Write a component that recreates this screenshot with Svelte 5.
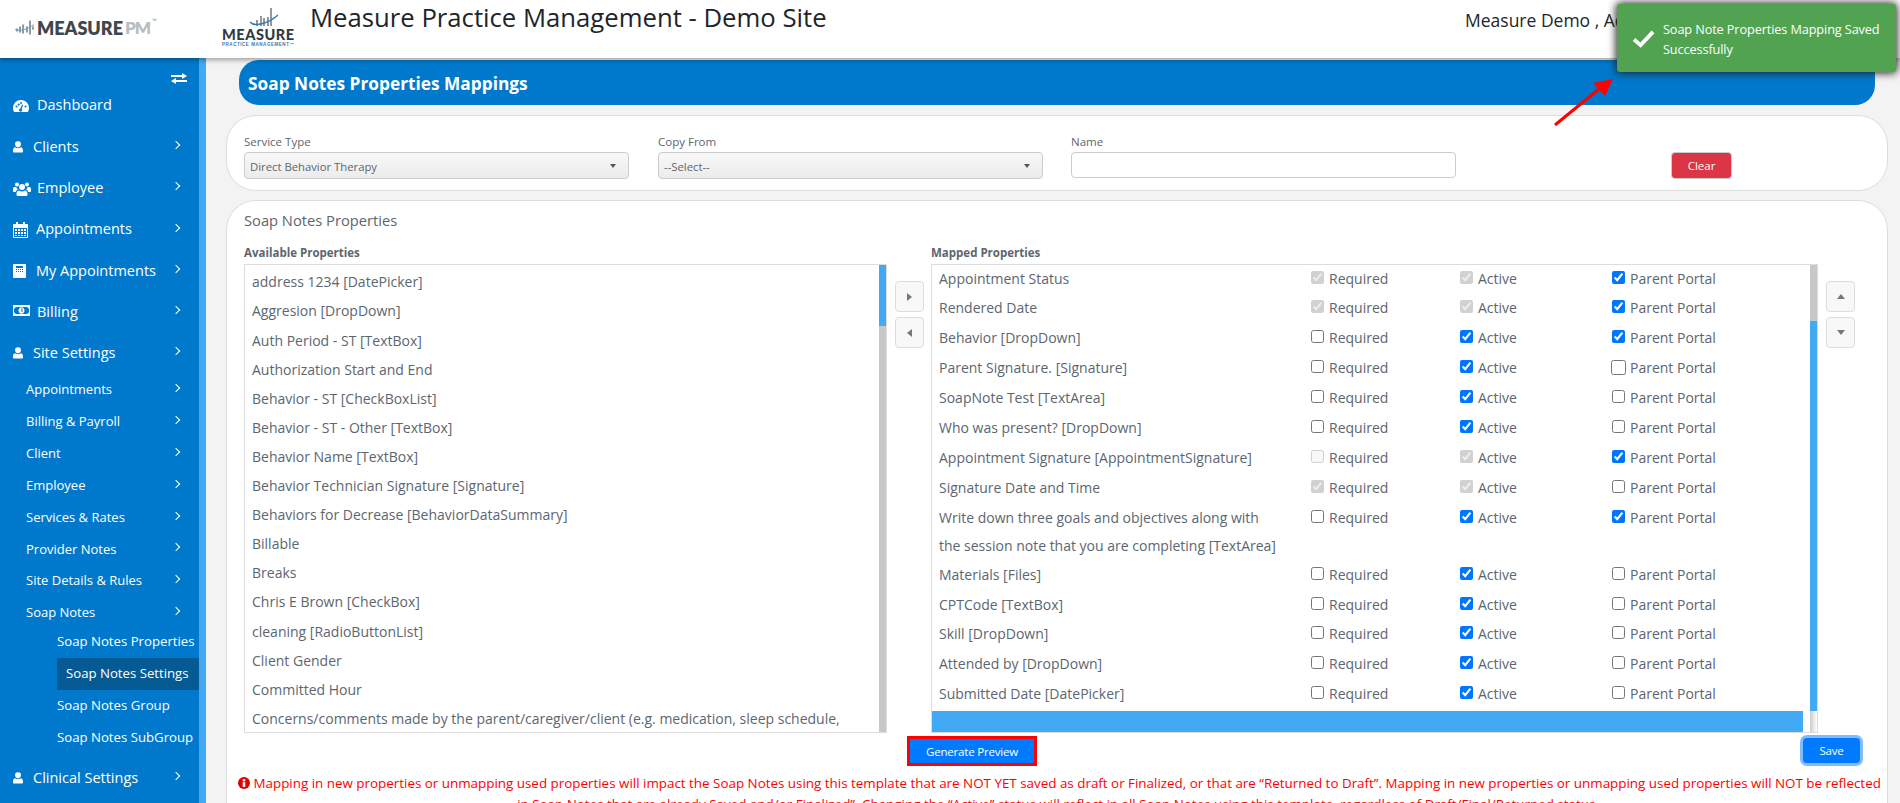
<script>
  const icons = {
    gauge: 'M8 2a8 8 0 0 0-8 8c0 1.500.400 2.900 1.100 4h13.800A8 8 0 0 0 16 10a8 8 0 0 0-8-8zm0 2a1 1 0 1 1 0 2 1 1 0 0 1 0-2zM3.500 9.500a1 1 0 1 1 0-2 1 1 0 0 1 0 2zm1.200-3a1 1 0 1 1 0 .1zM8.800 11.200a1.500 1.500 0 1 1-1.400-.6l1.800-4 .9.400zM12.500 9.500a1 1 0 1 1 0-2 1 1 0 0 1 0 2z',
    user: 'M6 1a3.500 3.500 0 0 1 3.500 3.800C9.500 7 8 8.500 6 8.500S2.500 7 2.500 4.800A3.500 3.500 0 0 1 6 1zM2.600 8.200C3.500 9 4.700 9.500 6 9.500s2.500-.500 3.400-1.300C11 8.500 12 10 12 12v1.300c0 .700-.500 1.200-1.200 1.200H1.200C.500 14.500 0 14 0 13.300V12c0-2 1-3.500 2.600-3.800z',
    users: 'M4 2.500a2 2 0 1 1 0 4 2 2 0 0 1 0-4zm10 0a2 2 0 1 1 0 4 2 2 0 0 1 0-4zM9 4a3 3 0 1 1 0 6 3 3 0 0 1 0-6zM0 9c0-1.200.700-2 1.700-2h1.500c.300 1 .900 1.800 1.700 2.400C3.800 9.800 3 10.700 2.700 12H1c-.600 0-1-.400-1-1zm13.100.4c.800-.600 1.400-1.400 1.700-2.400h1.500c1 0 1.700.800 1.700 2v2c0 .600-.400 1-1 1h-1.700c-.300-1.300-1.100-2.200-2.200-2.600zM6 10.500c.800.600 1.900 1 3 1s2.200-.400 3-1c1.500.200 2.500 1.500 2.500 3.200v1.100c0 .700-.500 1.200-1.200 1.200H4.700c-.700 0-1.200-.500-1.200-1.200v-1.100c0-1.700 1-3 2.500-3.200z',
    cal: 'M3 0h2v2h5V0h2v2h2a1 1 0 0 1 1 1v12a1 1 0 0 1-1 1H1a1 1 0 0 1-1-1V3a1 1 0 0 1 1-1h2zM1 6v9h13V6zm1 1h2v2H2zm3 0h2v2H5zm3 0h2v2H8zm3 0h2v2h-2zM2 10h2v2H2zm3 0h2v2H5zm3 0h2v2H8zm3 0h2v2h-2zM2 13h2v1H2zm3 0h2v1H5zm3 0h2v1H8zm3 0h2v1h-2z',
    book: 'M1 1h11a1 1 0 0 1 1 1v12a1 1 0 0 1-1 1H1a1 1 0 0 1-1-1V2a1 1 0 0 1 1-1zm2 2v2h7V3zm0 3v1h1V6zm2 0v1h1V6zm2 0v1h1V6zm2 0v1h1V6zM3 8v1h1V8zm2 0v1h1V8zm2 0v1h1V8zm2 0v1h1V8z',
    money: 'M0 1h17v11H0zm2.500 2A1.500 1.500 0 0 1 1 4.500v4A1.500 1.500 0 0 1 2.500 10h12a1.500 1.500 0 0 1 1.500-1.500v-4A1.500 1.500 0 0 1 14.500 3zM8.500 3.200c1.700 0 3 1.500 3 3.300s-1.300 3.300-3 3.300-3-1.500-3-3.300 1.300-3.300 3-3.300zM8 4.500v1h.500v2.500H9.500V4.500z'
  };
  const nav = [
    { label: 'Dashboard', icon: 'gauge', gap: 'g1', arrow: false },
    { label: 'Clients', icon: 'user', gap: 'g0', arrow: true },
    { label: 'Employee', icon: 'users', gap: 'g1', arrow: true },
    { label: 'Appointments', icon: 'cal', gap: 'g2', arrow: true },
    { label: 'My Appointments', icon: 'book', gap: 'g3', arrow: true },
    { label: 'Billing', icon: 'money', gap: 'g1', arrow: true },
    { label: 'Site Settings', icon: 'user', gap: 'g0', arrow: true }
  ];
  const subs = ['Appointments', 'Billing & Payroll', 'Client', 'Employee', 'Services & Rates', 'Provider Notes', 'Site Details & Rules', 'Soap Notes'];
  const subsubs = ['Soap Notes Properties', 'Soap Notes Settings', 'Soap Notes Group', 'Soap Notes SubGroup'];
  const available = [
    'address 1234 [DatePicker]', 'Aggresion [DropDown]', 'Auth Period - ST [TextBox]', 'Authorization Start and End',
    'Behavior - ST [CheckBoxList]', 'Behavior - ST - Other [TextBox]', 'Behavior Name [TextBox]',
    'Behavior Technician Signature [Signature]', 'Behaviors for Decrease [BehaviorDataSummary]', 'Billable', 'Breaks',
    'Chris E Brown [CheckBox]', 'cleaning [RadioButtonList]', 'Client Gender', 'Committed Hour',
    'Concerns/comments made by the parent/caregiver/client (e.g. medication, sleep schedule,'
  ];
  // r/a/p: 0 unchecked, 1 checked, 2 disabled checked, 3 disabled unchecked
  const mapped = [
    { n: 'Appointment Status', r: 2, a: 2, p: 1 },
    { n: 'Rendered Date', r: 2, a: 2, p: 1 },
    { n: 'Behavior [DropDown]', r: 0, a: 1, p: 1 },
    { n: 'Parent Signature. [Signature]', r: 0, a: 1, p: 0, big: true },
    { n: 'SoapNote Test [TextArea]', r: 0, a: 1, p: 0 },
    { n: 'Who was present? [DropDown]', r: 0, a: 1, p: 0 },
    { n: 'Appointment Signature [AppointmentSignature]', r: 3, a: 2, p: 1 },
    { n: 'Signature Date and Time', r: 2, a: 2, p: 0 },
    { n: 'Write down three goals and objectives along with the session note that you are completing [TextArea]', r: 0, a: 1, p: 1 },
    { n: 'Materials [Files]', r: 0, a: 1, p: 0 },
    { n: 'CPTCode [TextBox]', r: 0, a: 1, p: 0 },
    { n: 'Skill [DropDown]', r: 0, a: 1, p: 0 },
    { n: 'Attended by [DropDown]', r: 0, a: 1, p: 0 },
    { n: 'Submitted Date [DatePicker]', r: 0, a: 1, p: 0 }
  ];
</script>

<div class="page">
  <header class="top">
    <div class="brand">
      <svg class="bars" viewBox="0 0 20 14" width="20" height="15" aria-hidden="true">
        <path d="M2 8v3M5 6v6M8 4v9M12 6v6M15 0v14M18 6v3" stroke="#59636b" stroke-width="1.300"/>
        <path d="M0 9c6 2 12 0 19-5" stroke="#6f9fc4" stroke-width="1" fill="none"/>
      </svg>
      <span class="bm">MEASURE</span><span class="bp">PM</span><sup class="tm">™</sup>
    </div>
    <div class="logo2">
      <svg viewBox="0 0 30 22" width="30" height="22" aria-hidden="true">
        <path d="M8 12v6M12 8v10M15 10v8M19 9v9M22 0v18" stroke="#59636b" stroke-width="1.300"/>
        <path d="M1 14c4 5 18 2 28-7" stroke="#2f7fb8" stroke-width="1.400" fill="none"/>
      </svg>
      <div class="lm">MEASURE</div>
      <div class="ls">PRACTICE MANAGEMENT™</div>
    </div>
    <h1 class="site">Measure Practice Management - Demo Site</h1>
    <div class="who">Measure Demo , Admin</div>
  </header>

  <div class="body">
    <nav class="side">
      <div class="toggle">
        <svg viewBox="0 0 16 11" width="16" height="11" aria-hidden="true">
          <path d="M0 2h11V0l5 3-5 3V4H0zM16 7H5V5L0 8l5 3V9h11z" fill="#fff"/>
        </svg>
      </div>
      {#each nav as item}
        <div class="n1">
          <svg class="ni {item.gap}" viewBox="0 0 18 16" width="18" height="16" aria-hidden="true"><path d={icons[item.icon]} fill="#fff"/></svg>
          <span>{item.label}</span>
          {#if item.arrow}<i class="chev"></i>{/if}
        </div>
      {/each}
      <div class="subs">
        {#each subs as s}
          <div class="n2"><span>{s}</span><i class="chev"></i></div>
        {/each}
        <div class="tree">
          {#each subsubs as s, i}
            <div class="n3" class:on={i === 1}>{s}</div>
          {/each}
        </div>
      </div>
      <div class="n1 last">
        <svg class="ni g0" viewBox="0 0 18 16" width="18" height="16" aria-hidden="true"><path d={icons.user} fill="#fff"/></svg>
        <span>Clinical Settings</span><i class="chev"></i>
      </div>
    </nav>
    <div class="stripe"></div>

    <main class="main">
      <div class="title">Soap Notes Properties Mappings</div>

      <section class="card filters">
        <div class="field">
          <label for="st">Service Type</label>
          <div class="sel gray"><select id="st"><option>Direct Behavior Therapy</option></select></div>
        </div>
        <div class="field">
          <label for="cf">Copy From</label>
          <div class="sel"><select id="cf"><option>--Select--</option></select></div>
        </div>
        <div class="field namef">
          <label for="nm">Name</label>
          <input id="nm" class="txt" type="text" />
        </div>
        <button class="clear">Clear</button>
      </section>

      <section class="card props">
        <h2>Soap Notes Properties</h2>
        <div class="cols">
          <div class="col-a">
            <h3>Available Properties</h3>
            <div class="box">
              <ul class="avail">
                {#each available as a}<li>{a}</li>{/each}
              </ul>
              <div class="sb sb-a"><div class="th"></div></div>
            </div>
          </div>
          <div class="mv">
            <button class="sq" aria-label="Move right"><i class="tr r"></i></button>
            <button class="sq" aria-label="Move left"><i class="tr l"></i></button>
          </div>
          <div class="col-b">
            <h3>Mapped Properties</h3>
            <div class="box">
              <div class="mapwrap">
                <div class="rows">
                  {#each mapped as m}
                    <div class="row">
                      <div class="nm">{m.n}</div>
                      {#each [['Required', m.r], ['Active', m.a], ['Parent Portal', m.p]] as [lab, v]}
                        <label class="ck">
                          <input type="checkbox" class:big={m.big && lab === 'Parent Portal'} checked={v === 1 || v === 2} disabled={v >= 2} />
                          <span>{lab}</span>
                        </label>
                      {/each}
                    </div>
                  {/each}
                </div>
                <div class="hbar"></div>
              </div>
              <div class="sb sb-b"><div class="t1"></div><div class="t2"></div><div class="t3"></div></div>
            </div>
          </div>
          <div class="mv ud">
            <button class="sq" aria-label="Move up"><i class="tr u"></i></button>
            <button class="sq" aria-label="Move down"><i class="tr d"></i></button>
          </div>
        </div>
        <div class="actions">
          <button class="prim gen">Generate Preview</button>
          <button class="prim save">Save</button>
        </div>
        <p class="warn">
          <svg viewBox="0 0 14 14" width="12" height="12" aria-hidden="true"><circle cx="7" cy="7" r="7" fill="#e00000"/><rect x="5.500" y="2.500" width="3" height="2.500" fill="#fff"/><rect x="5.500" y="6" width="3" height="5.500" fill="#fff"/></svg>
          Mapping in new properties or unmapping used properties will impact the Soap Notes using this template that are NOT YET saved as draft or Finalized, or that are “Returned to Draft”. Mapping in new properties or unmapping used properties will NOT be reflected<br />in Soap Notes that are already Saved and/or Finalized”. Changing the “Active” status will reflect in all Soap Notes using this template, regardless of Draft/Final/Returned status.
        </p>
      </section>
    </main>
  </div>

  <div class="toast">
    <svg viewBox="0 0 24 20" width="23" height="19" aria-hidden="true"><path d="M2 11l7 6L22 3" stroke="#fff" stroke-width="4" fill="none"/></svg>
    <div>Soap Note Properties Mapping Saved Successfully</div>
  </div>
  <svg class="arrow" viewBox="0 0 70 60" width="70" height="60" aria-hidden="true">
    <path d="M3 56L47 20" stroke="#f00" stroke-width="3"/>
    <path d="M61 10L41 14l12 13z" fill="#f00"/>
  </svg>
</div>

<style>
  :global(body) { margin: 0; background: #f3f3f3; }
  .page {
    position: relative; width: 1900px; height: 803px; overflow: hidden;
    font-family: "Open Sans", "Noto Sans", sans-serif; color: #5c6670; background: #f3f3f3;
  }
  .top {
    position: relative; z-index: 2; height: 58px; background: #fff; display: flex; align-items: flex-start;
    box-shadow: 0 2px 5px rgba(0,0,0,.35);
  }
  .brand { width: 222px; flex: none; box-sizing: border-box; padding: 18px 0 0 15px; display: flex; align-items: center; height: 37px; }
  .bars { margin-right: 2px; }
  .bm { font: 800 18px/1 Lato, sans-serif; color: #3e474e; }
  .bp { font: 800 17px/1 Lato, sans-serif; color: #b9bdc0; margin-left: 2px; letter-spacing: -1px; }
  .tm { font-size: 6px; color: #999; align-self: flex-start; margin-top: 0; line-height: 1; margin-left: 2px; }
  .logo2 { width: 88px; flex: none; text-align: center; padding-top: 8px; line-height: 1; }
  .logo2 svg { display: block; margin-left: 27px; }
  .lm { font: 900 14.500px/11px Lato, sans-serif; color: #2e3b45; text-align: left; letter-spacing: .55px; margin-top: -1px; }
  .ls { font: 700 4.500px/6px "Liberation Sans", sans-serif; color: #3b78ad; text-align: left; letter-spacing: .55px; margin-top: 2px; white-space: nowrap; }
  .site { margin: 1px 0 0 0; font: 400 25.700px/34px "Open Sans", sans-serif; color: #212529; white-space: nowrap; }
  .who { position: absolute; left: 1465px; top: 7px; font: 400 17.500px/26px "Open Sans", sans-serif; color: #212529; white-space: nowrap; }

  .body { display: flex; height: 745px; }
  .side { width: 199px; flex: none; background: #0079cc; color: #fff; font-size: 14.500px; overflow: hidden; }
  .stripe { width: 7px; flex: none; background: #42a9f4; }
  .toggle { height: 27px; display: flex; justify-content: flex-end; align-items: flex-end; padding-right: 12px; box-sizing: border-box; padding-bottom: 1px; }
  .n1 { position: relative; height: 41.300px; display: flex; align-items: center; padding-left: 13px; white-space: nowrap; }
  .n1 span { line-height: 1; }
  .ni { flex: none; }
  .g0 { margin-right: 5px; width: 15px; }
  .g1 { margin-right: 6px; }
  .g2 { margin-right: 5px; }
  .g3 { margin-right: 5px; }
  .chev { position: absolute; left: 173px; width: 5px; height: 5px; border: solid #fff; border-width: 1.500px 1.500px 0 0; transform: rotate(45deg); top: 50%; margin-top: -5px; }
  .subs { font-size: 13px; margin-top: 0; }
  .n2 { position: relative; height: 31.900px; line-height: 31.900px; padding-left: 26px; white-space: nowrap; }
  .tree { margin-top: -3px; }
  .n3 { height: 32px; line-height: 30px; margin-left: 57px; white-space: nowrap; font-size: 13.200px; }
  .n3.on { background: #055a94; padding-left: 9px; }
  .last { margin-top: 3px; }

  .main { flex: 1; min-width: 0; padding: 2px 12px 0 20px; }
  .title {
    margin: 0 13px 10px 13px; height: 45px; box-sizing: border-box; padding: 4px 0 0 9px; line-height: 40px;
    background: #0079cc; color: #fff; font-weight: 700; font-size: 17.300px;
    border-radius: 20px 0 20px 20px;
  }
  .card { background: #fff; border: 1px solid #ddd; border-radius: 30px; box-sizing: border-box; }
  .filters { height: 76px; display: flex; padding: 16px 0 0 17px; gap: 29px; margin-bottom: 9px; position: relative; }
  .field { width: 385px; display: flex; flex-direction: column; }
  .namef { margin-left: -1px; }
  .field label { font-size: 11.500px; line-height: 20px; }
  .sel { position: relative; height: 27px; }
  .sel select {
    appearance: none; width: 100%; height: 27px; box-sizing: border-box; border: 1px solid #ccc; border-radius: 4px;
    font: 400 11.300px "Open Sans", sans-serif; color: #5c6670; padding: 2px 5px 0; background: linear-gradient(#f8f8f8, #ececec);
  }
  .sel::after { content: ""; position: absolute; right: 13px; top: 12px; border: 3px solid transparent; border-top: 4px solid #555; border-bottom: 0; pointer-events: none; }
  .txt { height: 26px; box-sizing: border-box; border: 1px solid #ccc; border-radius: 4px; background: #fff; margin-top: 0; }
  .clear {
    position: absolute; left: 1444px; top: 36px; width: 61px; height: 27px; background: #dc3545; color: #fff; border: 1px solid #ccc; border-radius: 4px;
    font: 400 11.500px "Open Sans", sans-serif; padding: 0;
  }
  .props { height: 640px; padding: 0 0 0 17px; }
  h2 { margin: 0; font: 400 14.700px/39px "Open Sans", sans-serif; color: #5c6670; height: 37px; }
  h3 { margin: 0; font: 700 11.500px/29px "Open Sans", sans-serif; color: #5c6670; height: 26px; }
  .cols { display: flex; }
  .col-a { width: 643px; flex: none; }
  .col-b { width: 887px; flex: none; }
  .box { height: 469px; box-sizing: border-box; border: 1px solid #ddd; display: flex; overflow: hidden; background: #fff; }
  .avail { list-style: none; margin: 0; padding: 2.400px 0 0 7px; flex: 1; min-width: 0; overflow: hidden; }
  .avail li { height: 29.100px; line-height: 29.100px; font-size: 14px; white-space: nowrap; }
  .sb { width: 7px; flex: none; display: flex; flex-direction: column; }
  .sb-a { background: #c8c8c8; }
  .sb-a .th { height: 61px; background: #42a9f4; }
  .sb-b { background: #f0f0f0; }
  .t1 { height: 56px; background: #c8c8c8; }
  .t2 { height: 390px; background: #42a9f4; }
  .t3 { flex: 1; background: linear-gradient(90deg, #ccc, #fff); }
  .mv { width: 44px; flex: none; display: flex; flex-direction: column; align-items: center; padding-top: 43px; gap: 5px; box-sizing: border-box; }
  .ud { align-items: flex-start; padding-left: 8px; width: 40px; }
  .sq { width: 29px; height: 31px; border: 1px solid #ddd; border-radius: 4px; background: #f8f8f8; padding: 0; display: flex; align-items: center; justify-content: center; }
  .tr { width: 0; height: 0; border: 4px solid transparent; }
  .tr.r { border-left: 5px solid #777; border-right: 0; }
  .tr.l { border-right: 5px solid #777; border-left: 0; }
  .tr.u { border-bottom: 5px solid #777; border-top: 0; }
  .tr.d { border-top: 5px solid #777; border-bottom: 0; }
  .mapwrap { flex: 1; min-width: 0; display: flex; flex-direction: column; }
  .rows { height: 446px; overflow: hidden; }
  .row { display: grid; grid-template-columns: 372px 149px 152px 1fr; padding-left: 7px; font-size: 14px; line-height: 28.500px; min-height: 29.900px; }
  .row:first-child { margin-top: -.5px; }
  .nm { padding-right: 30px; }
  .ck { display: flex; align-items: flex-start; gap: 5px; }
  .ck input { width: 13px; height: 13px; margin: 6px 0 0 0; flex: none; }
  .ck input.big { width: 15px; height: 15px; margin-left: -1px; margin-right: -1px; }
  .hbar { height: 21px; background: #42a9f4; margin-right: 7px; }
  .actions { position: relative; height: 32px; padding-top: 3px; display: flex; align-items: flex-start; }
  .prim { background: #007bff; color: #fff; font: 400 11.500px "Open Sans", sans-serif; border: 0; padding: 0; letter-spacing: -.2px; }
  .gen { margin-left: 663px; width: 130px; height: 30px; border: 3px solid #f00; box-sizing: border-box; }
  .save { margin-left: 766px; width: 57px; height: 25px; margin-top: 2px; border-radius: 4px; box-shadow: 0 0 0 3px #80bdff; }
  .warn { margin: 5px 0 0 -6px; width: 1640px; color: #f00; text-align: center; font-size: 13.400px; line-height: 21px; white-space: nowrap; }
  .warn svg { vertical-align: -1px; }

  .toast {
    position: absolute; z-index: 5; left: 1617px; top: 4px; width: 279px; height: 68px; box-sizing: border-box; background: #51a351;
    color: #fff; border-radius: 3px; box-shadow: 0 0 8px 1px #222; display: flex; align-items: center; padding: 2px 8px 0 15px; gap: 8px;
    font-size: 12.700px; line-height: 20px; letter-spacing: -.1px;
  }
  .toast svg { flex: none; margin-top: -2px; }
  .arrow { position: absolute; z-index: 4; left: 1552px; top: 69px; }
</style>
